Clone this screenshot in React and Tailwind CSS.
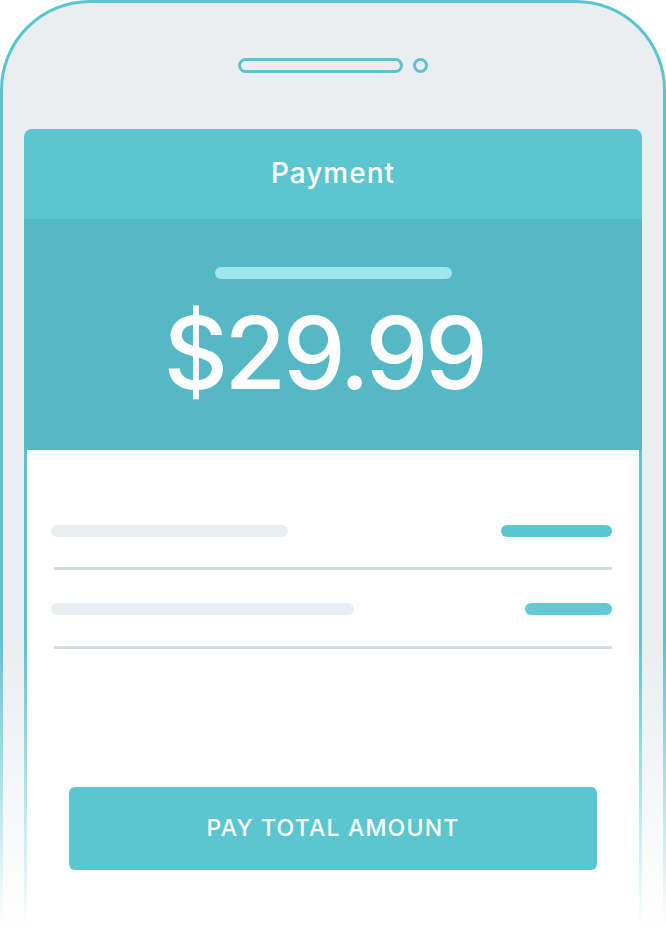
import React from 'react';

const font = { fontFamily: 'Inter, Lato, sans-serif' };

const Row = ({ left, right, tone }) => (
  <div className="flex items-center justify-between">
    <div className={`h-[12px] rounded-full bg-[#EAEEF1] ${left}`} />
    <div className={`h-[12px] rounded-full ${tone} ${right}`} />
  </div>
);

export default function App() {
  return (
    <div className="relative w-[666px] h-[927px] overflow-hidden bg-white" style={font}>
      {/* phone body */}
      <div className="h-[1000px] rounded-t-[90px] border-[3px] border-[#5BC5CF] bg-[#EAEEF1] flex flex-col px-[21px] pt-[55px]">
        <div className="flex items-center justify-center gap-[10px] h-[15px]">
          <div className="w-[165px] h-[15px] rounded-full border-[3px] border-[#5BC5CF]" />
          <div className="w-[15px] h-[15px] rounded-full border-[3px] border-[#5BC5CF]" />
        </div>

        <div className="mt-[56px] flex flex-col flex-1 rounded-t-[8px] overflow-hidden">
          <div className="h-[90px] shrink-0 bg-[#5BC6D0] flex items-center justify-center">
            <span className="text-white text-[28px] leading-none font-medium tracking-[1px] pb-[2px]">Payment</span>
          </div>

          <div className="h-[231px] shrink-0 bg-[#55B9C5] flex flex-col items-center pt-[48px]">
            <div className="w-[237px] h-[12px] rounded-full bg-[#A0E6EE]" />
            <div className="mt-[20px] mr-[18px] text-white text-[100px] leading-[108px] font-medium tracking-[-3.5px]">$29.99</div>
          </div>

          <div className="flex-1 bg-white border-x-[3px] border-[#5BC5CF] pt-[75px] px-[24px]">
            <Row left="w-[237px]" right="w-[111px] mr-[3px]" tone="bg-[#5CC6D0]" />
            <div className="ml-[3px] mr-[3px] mt-[30px] h-[3px] bg-[#D3DCDE]" />
            <div className="mt-[33px]">
              <Row left="w-[303px]" right="w-[87px] mr-[3px]" tone="bg-[#66C8D3]" />
            </div>
            <div className="ml-[3px] mr-[3px] mt-[31px] h-[3px] bg-[#D3DCDE]" />

            <div className="mt-[138px] mx-[18px] relative z-20">
              <button className="w-full h-[83px] rounded-[6px] bg-[#5CC6D0] text-white text-[23px] font-medium tracking-[1.2px] flex items-center justify-center">
                PAY TOTAL AMOUNT
              </button>
            </div>
          </div>
        </div>
      </div>

      {/* bottom fade of the device frame */}
      <div className="pointer-events-none absolute inset-x-0 top-[640px] bottom-0 z-10 bg-linear-to-b from-white/0 to-white" />
    </div>
  );
}
